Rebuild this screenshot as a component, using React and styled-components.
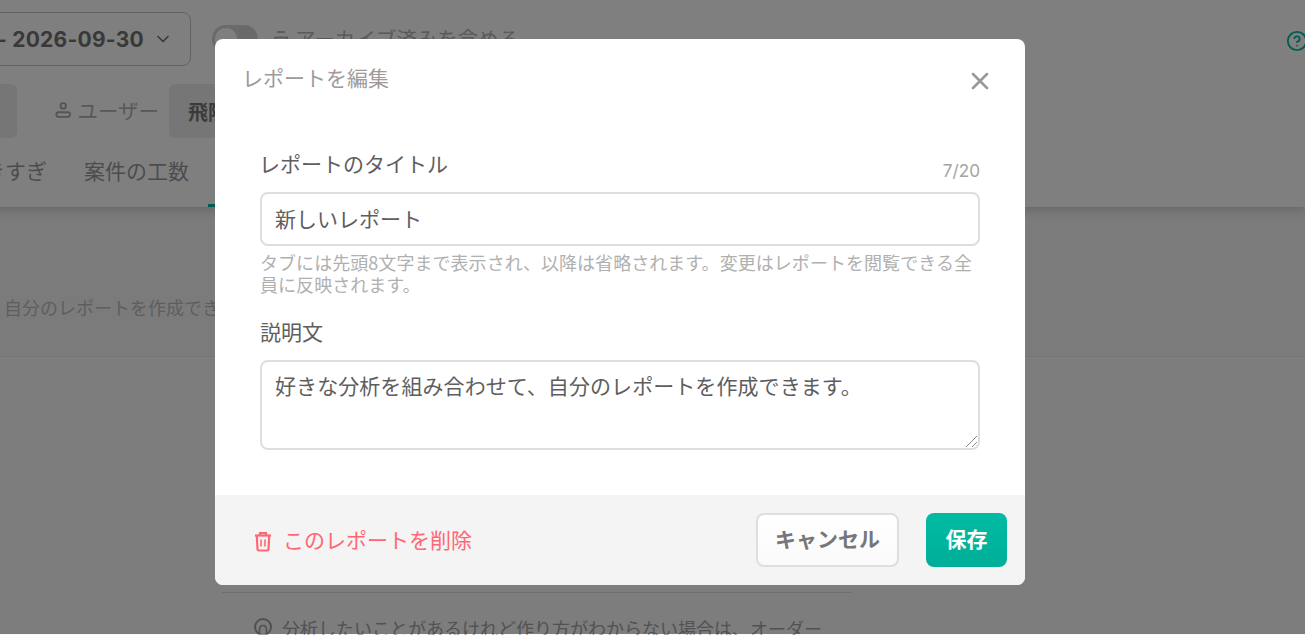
import React from "react";
import styled, { createGlobalStyle } from "styled-components";
import { ChevronDown, X, CircleHelp } from "lucide-react";

const Global = createGlobalStyle`
  html, body { margin: 0; padding: 0; height: 100%; overflow: hidden; }
  body { font-family: "Inter", "Noto Sans CJK JP", sans-serif; color: #333; background: #f6f6f6; }
  * { box-sizing: border-box; }
`;

const FONT = `"Noto Sans CJK JP", sans-serif`;

const Page = styled.div`
  position: relative;
  width: 1305px;
  height: 635px;
  overflow: hidden;
  background: #f6f6f6;
`;
const Header = styled.header`
  height: 207px;
  background: #fff;
  box-shadow: 0 2px 10px rgba(0,0,0,.2);
  position: relative;
  padding-top: 12px;
  margin-left: -60px;
`;
const TopRow = styled.div`
  display: flex;
  align-items: center;
  height: 54px;
`;
const DateBox = styled.div`
  width: 251px;
  height: 54px;
  border: 1px solid #c4c4c4;
  border-radius: 8px;
  display: flex;
  align-items: center;
  justify-content: flex-end;
  gap: 9px;
  padding-right: 17px;
  font: 700 21px "Inter", sans-serif;
  letter-spacing: 0.25px;
  color: #727272;
  white-space: nowrap;
`;
const Toggle = styled.div`
  width: 46px;
  height: 28px;
  border-radius: 14px;
  background: #d4d4d4;
  margin-left: 21px;
  padding: 3px;
  flex: none;
  &::before { content: ""; display: block; width: 22px; height: 22px; border-radius: 50%; background: #fff; }
`;
const ArchiveLabel = styled.div`
  margin-left: 14px;
  display: flex;
  align-items: center;
  gap: 5px;
  font: 400 20.5px/26px ${FONT};
  color: #b4b4b4;
  white-space: nowrap;
  span { margin-top: -2px; }
`;
const FilterRow = styled.div`
  display: flex;
  align-items: center;
  height: 54px;
  margin-top: 18px;
`;
const Chip = styled.div`
  height: 54px;
  width: ${p => p.$w}px;
  background: #ececec;
  border-radius: 6px;
  flex: none;
  font: 700 20px ${FONT};
  color: #777;
  display: flex;
  align-items: center;
  padding-left: 19px;
  white-space: nowrap;
`;
const FilterLabel = styled.div`
  margin-left: 38px;
  margin-right: 10px;
  width: 104px;
  display: flex;
  align-items: center;
  gap: 6px;
  font: 400 20.5px ${FONT};
  color: #b0b0b0;
  white-space: nowrap;
  margin-top: -3px;
`;
const Tabs = styled.div`
  display: flex;
  align-items: center;
  height: 63px;
  margin-bottom: 6px;
  padding-left: 23px;
  gap: 37px;
  position: relative;
`;
const Tab = styled.div`
  font: 400 21px ${FONT};
  color: #999;
  white-space: nowrap;
`;
const TabBar = styled.span`
  position: absolute;
  left: 268px;
  bottom: -6px;
  width: 40px;
  height: 3px;
  background: #00b8a0;
`;
const HelpIcon = styled.span`
  position: absolute;
  left: 1346px;
  top: 30px;
  color: #00b8a0;
  display: flex;
`;
const Content = styled.main`
  padding-left: 4px;
`;
const Lead = styled.p`
  margin: 87px 0 0;
  font: 400 18px/27px ${FONT};
  color: #bdbdbd;
  white-space: nowrap;
`;
const Panel = styled.section`
  margin-top: 35px;
  margin-left: -4px;
  height: 280px;
  background: #fafafa;
  border-top: 1px solid #eaeaea;
  padding: 0 0 0 222px;
`;
const Divider = styled.hr`
  width: 630px;
  margin: 235px 0 0;
  border: 0;
  border-top: 1px solid #dcdcdc;
`;
const Hint = styled.div`
  margin-top: 23px;
  display: flex;
  align-items: center;
  gap: 9px;
  padding-left: 31px;
  font: 400 18px/24px ${FONT};
  color: #a4a4a4;
  white-space: nowrap;
`;
const Overlay = styled.div`
  position: absolute;
  inset: 0 0 1px 0;
  background: rgba(0,0,0,.5);
`;
const Dialog = styled.div`
  position: absolute;
  left: 215px;
  top: 39px;
  width: 810px;
  height: 546px;
  background: #fff;
  border-radius: 8px;
  overflow: hidden;
  display: flex;
  flex-direction: column;
  font-family: ${FONT};
`;
const DialogHead = styled.div`
  display: flex;
  align-items: flex-start;
  justify-content: space-between;
  padding: 24px 31px 0 27px;
  height: 107px;
`;
const DialogTitle = styled.h2`
  margin: -2px 0 0;
  font: 400 21px/32px ${FONT};
  color: #a09a9a;
`;
const Close = styled.button`
  border: 0;
  background: none;
  padding: 0;
  margin-top: 4px;
  color: #999;
  display: flex;
`;
const Body = styled.div`
  flex: 1;
  padding: 0 45px;
`;
const LabelRow = styled.div`
  display: flex;
  align-items: flex-end;
  justify-content: space-between;
  height: 46px;
  padding-bottom: 9px;
`;
const Label = styled.label`
  font: 400 21px/34px ${FONT};
  color: #5e5e5e;
  margin: 0 0 3px -1px;
`;
const Counter = styled.span`
  font: 400 17.2px/24px "Inter", sans-serif;
  color: #a4a4a4;
`;
const TextInput = styled.div`
  height: 54px;
  border: 2px solid #dedede;
  border-radius: 8px;
  padding: 0 13px 2px;
  display: flex;
  align-items: center;
  font: 400 21px ${FONT};
  color: #5e5e5e;
`;
const Help = styled.p`
  margin: 5px 0 0;
  font: 400 18px/22px ${FONT};
  letter-spacing: 0.05px;
  color: #b0b0b0;
`;
const DescLabel = styled(Label)`
  display: block;
  margin: 19px 0 0;
  height: 46px;
`;
const TextArea = styled.div`
  position: relative;
  height: 90px;
  border: 2px solid #dedede;
  border-radius: 8px;
  padding: 6px 13px;
  font: 400 21px/34px ${FONT};
  letter-spacing: 0.07px;
  color: #5e5e5e;
  white-space: nowrap;
`;
const Grip = styled.svg`
  position: absolute;
  right: 0;
  bottom: 0;
`;
const Footer = styled.div`
  height: 90px;
  background: #f4f4f4;
  display: flex;
  align-items: center;
  padding: 0 18px 0 38px;
`;
const DeleteLink = styled.div`
  display: flex;
  align-items: center;
  gap: 10px;
  font: 400 21px ${FONT};
  color: #ff6673;
  flex: 1;
  margin-top: -2px;
  svg { margin-top: 3px; }
`;
const Cancel = styled.button`
  width: 143px;
  height: 54px;
  background: linear-gradient(#fff, #fafafa);
  border: 2px solid #dedede;
  border-radius: 8px;
  font: 700 21px ${FONT};
  color: #777;
  margin-right: 27px;
  padding-bottom: 5px;
`;
const Save = styled.button`
  width: 81px;
  height: 54px;
  background: linear-gradient(#00bba3, #00ae98);
  border: 0;
  border-radius: 8px;
  font: 700 21px ${FONT};
  color: #fff;
  padding-bottom: 5px;
`;

const UserGlyph = () => (
  <svg width="18" height="18" viewBox="0 0 18 18" fill="none" stroke="#a8a8a8" strokeWidth="2">
    <circle cx="9" cy="4.5" r="3" />
    <rect x="1.5" y="11.5" width="15" height="5" rx="2.5" />
  </svg>
);
const ArchiveGlyph = () => (
  <svg width="18" height="18" viewBox="0 0 18 18" fill="none" stroke="#b4b4b4" strokeWidth="1.8" style={{ flex: "none" }}>
    <path d="M5 2 H13" />
    <path d="M2 7.5 H16" />
    <path d="M3 7.5 V16 H15 V7.5" />
  </svg>
);
const TrashGlyph = () => (
  <svg width="20" height="22" viewBox="0 0 20 22" fill="none" stroke="#ff6673" strokeWidth="2.2" style={{ flex: "none" }}>
    <path d="M2 5.5 H18" />
    <path d="M7 5 V3 H13 V5" />
    <path d="M3.8 6 L4.5 19.5 Q4.6 20.5 5.6 20.5 H14.4 Q15.4 20.5 15.5 19.5 L16.2 6" />
    <path d="M8 9.5 V16.5 M12 9.5 V16.5" strokeWidth="1.6" />
  </svg>
);
const FaceGlyph = () => (
  <svg width="20" height="22" viewBox="0 0 20 22" fill="none" stroke="#a0a0a0" strokeWidth="2" style={{ flex: "none" }}>
    <circle cx="10" cy="10" r="8" />
    <path d="M6.5 20 V13 C6.5 7 13.5 7 13.5 13 V20" strokeWidth="1.6" />
  </svg>
);

export default function App() {
  return (
    <Page>
      <Global />
      <Header>
        <TopRow>
          <DateBox>- 2026-09-30 <ChevronDown size={20} strokeWidth={2} /></DateBox>
          <Toggle />
          <ArchiveLabel><ArchiveGlyph /><span>アーカイブ済みを含める</span></ArchiveLabel>
        </TopRow>
        <FilterRow>
          <Chip $w={77} />
          <FilterLabel><UserGlyph />ユーザー</FilterLabel>
          <Chip $w={180}>飛阪太郎</Chip>
        </FilterRow>
        <Tabs>
          <Tab>働きすぎ</Tab>
          <Tab>案件の工数</Tab>
          <TabBar />
        </Tabs>
        <HelpIcon><CircleHelp size={22} /></HelpIcon>
      </Header>
      <Content>
        <Lead>自分のレポートを作成できます。</Lead>
        <Panel>
          <Divider />
          <Hint><FaceGlyph />分析したいことがあるけれど作り方がわからない場合は、オーダー</Hint>
        </Panel>
      </Content>
      <Overlay />
      <Dialog>
        <DialogHead>
          <DialogTitle>レポートを編集</DialogTitle>
          <Close><X size={28} strokeWidth={2.2} /></Close>
        </DialogHead>
        <Body>
          <LabelRow>
            <Label>レポートのタイトル</Label>
            <Counter>7/20</Counter>
          </LabelRow>
          <TextInput>新しいレポート</TextInput>
          <Help>タブには先頭8文字まで表示され、以降は省略されます。変更はレポートを閲覧できる全員に反映されます。</Help>
          <DescLabel>説明文</DescLabel>
          <TextArea>
            好きな分析を組み合わせて、自分のレポートを作成できます。
            <Grip width="14" height="14" viewBox="0 0 14 14">
              <path d="M2 13 L13 2 M8 13 L13 8" stroke="#888" strokeWidth="1" fill="none" />
            </Grip>
          </TextArea>
        </Body>
        <Footer>
          <DeleteLink><TrashGlyph />このレポートを削除</DeleteLink>
          <Cancel>キャンセル</Cancel>
          <Save>保存</Save>
        </Footer>
      </Dialog>
    </Page>
  );
}
